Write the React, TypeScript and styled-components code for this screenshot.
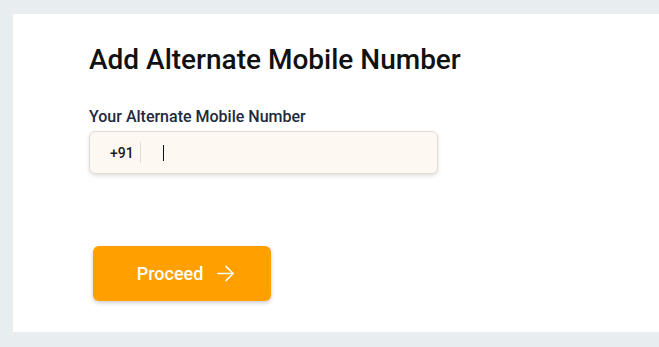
import styled, { createGlobalStyle } from "styled-components";

const GlobalStyle = createGlobalStyle`
  html, body {
    margin: 0;
    padding: 0;
    background: #e8edf0;
    font-family: Roboto, "Liberation Sans", sans-serif;
  }
`;

const Page = styled.div`
  width: 659px;
  height: 347px;
  padding: 14px 0 15px 13px;
  box-sizing: border-box;
  overflow: hidden;
`;

const Card = styled.div`
  background: #fff;
  height: 100%;
  padding: 29px 0 0 76px;
  box-sizing: border-box;
`;

const Title = styled.h1`
  margin: 0;
  font-size: 28px;
  font-weight: 500;
  color: #111;
  line-height: 34px;
`;

const Label = styled.label`
  display: block;
  margin-top: 30px;
  font-size: 16px;
  font-weight: 500;
  color: #1c2a3d;
  line-height: 19px;
`;

const InputBox = styled.div`
  margin-top: 5px;
  width: 349px;
  height: 43px;
  box-sizing: border-box;
  display: flex;
  align-items: center;
  background: #fdf8f1;
  border: 1px solid #e1ddd6;
  border-radius: 6px;
  box-shadow: 0 2px 4px rgba(0, 0, 0, 0.12);
`;

const Prefix = styled.span`
  padding: 0 0 0 20px;
  font-size: 14px;
  font-weight: 500;
  color: #1a1a1a;
`;

const Divider = styled.span`
  width: 1px;
  height: 21px;
  margin-left: 6px;
  background: #e2ddd5;
`;

const Caret = styled.span`
  width: 1.5px;
  height: 16px;
  margin-left: 22px;
  background: #111;
`;

const Button = styled.button`
  margin: 72px 0 0 4px;
  width: 178px;
  height: 55px;
  padding: 0 0 0 8px;
  border: none;
  border-radius: 6px;
  background: #ffa000;
  box-shadow: 0 2px 4px rgba(0, 0, 0, 0.2);
  color: #fff;
  display: flex;
  align-items: center;
  justify-content: center;
  gap: 13px;
  font-family: Roboto, "Liberation Sans", sans-serif;
  font-size: 18px;
  font-weight: 500;
  cursor: pointer;
`;

const Arrow = () => (
  <svg width="19" height="19" viewBox="0 0 20 20" fill="none" stroke="#fff" strokeWidth="1.6" strokeLinecap="round" strokeLinejoin="round">
    <path d="M2 10h16" />
    <path d="M10.5 2.5L18 10l-7.5 7.5" />
  </svg>
);

const App = () => {
  return (
    <>
      <GlobalStyle />
      <Page>
        <Card>
          <Title>Add Alternate Mobile Number</Title>
          <Label>Your Alternate Mobile Number</Label>
          <InputBox>
            <Prefix>+91</Prefix>
            <Divider />
            <Caret />
          </InputBox>
          <Button>
            Proceed
            <Arrow />
          </Button>
        </Card>
      </Page>
    </>
  );
};

export default App;
